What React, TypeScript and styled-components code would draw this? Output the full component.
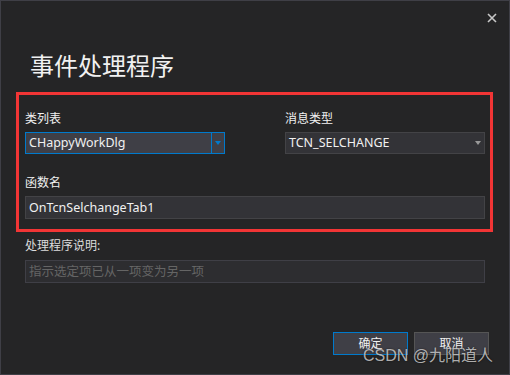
import styled, { createGlobalStyle } from "styled-components";

const GlobalStyle = createGlobalStyle`
  html, body {
    margin: 0;
    padding: 0;
    background: #252526;
  }
  * {
    box-sizing: border-box;
  }
`;

const FONT = `"Noto Sans", "Noto Sans CJK SC", sans-serif`;

// 다이얼로그 전체 틀
const Window = styled.div`
  position: relative;
  width: 510px;
  height: 375px;
  background: #252526;
  border: 1px solid #3f3f46;
  display: flex;
  flex-direction: column;
  font-family: ${FONT};
  color: #f1f1f1;
`;

const TitleBar = styled.div`
  height: 30px;
  display: flex;
  justify-content: flex-end;
  align-items: flex-start;
  padding: 11px 11px 0 0;
`;

const CloseButton = styled.button`
  width: 12px;
  height: 12px;
  padding: 0;
  border: none;
  background: transparent;
  display: flex;
  align-items: center;
  justify-content: center;
  cursor: pointer;
`;

const Heading = styled.h1`
  margin: 19px 0 0 29px;
  font-size: 24px;
  font-weight: 400;
  line-height: 32px;
  height: 32px;
  color: #f1f1f1;
`;

// 빨간 강조 박스
const HighlightBox = styled.section`
  margin: 10px 16px 0 15px;
  border: 3px solid #f23535;
  padding: 16px 5px 10px 6px;
  display: grid;
  grid-template-columns: 200px 200px;
  justify-content: space-between;
  row-gap: 21px;
`;

const Field = styled.div<{ $wide?: boolean }>`
  display: flex;
  flex-direction: column;
  gap: 5px;
  grid-column: ${({ $wide }) => ($wide ? "1 / -1" : "auto")};
`;

const Label = styled.label<{ $dim?: boolean }>`
  font-size: 12px;
  line-height: 16px;
  height: 16px;
  color: ${({ $dim }) => ($dim ? "#dcdcdc" : "#f1f1f1")};
`;

const Combo = styled.div<{ $focused?: boolean }>`
  height: 22px;
  display: flex;
  align-items: stretch;
  background: ${({ $focused }) => ($focused ? "#3f3f46" : "#333337")};
  border: 1px solid ${({ $focused }) => ($focused ? "#007acc" : "#434346")};
`;

const ComboText = styled.span`
  flex: 1;
  padding-left: 3px;
  font-size: 12.5px;
  line-height: 20px;
  color: #f1f1f1;
`;

const ComboButton = styled.span<{ $focused?: boolean }>`
  width: 13px;
  display: flex;
  align-items: center;
  justify-content: center;
  border-left: 1px solid ${({ $focused }) => ($focused ? "#007acc" : "transparent")};
`;

const Arrow = styled.span<{ $focused?: boolean }>`
  width: 0;
  height: 0;
  border-left: 3.5px solid transparent;
  border-right: 3.5px solid transparent;
  border-top: 4px solid ${({ $focused }) => ($focused ? "#007acc" : "#999999")};
`;

const TextBox = styled.div<{ $disabled?: boolean }>`
  height: 23px;
  padding-left: 3px;
  background: ${({ $disabled }) => ($disabled ? "#2d2d30" : "#333337")};
  border: 1px solid ${({ $disabled }) => ($disabled ? "#3f3f46" : "#434346")};
  font-size: 12.5px;
  line-height: 21px;
  color: ${({ $disabled }) => ($disabled ? "#656565" : "#f1f1f1")};
`;

const Description = styled.div`
  margin: 6px 24px 0 24px;
  display: flex;
  flex-direction: column;
  gap: 6px;
`;

const Footer = styled.div`
  margin-top: auto;
  padding: 0 20px 19px 0;
  display: flex;
  justify-content: flex-end;
  gap: 6px;
`;

const DialogButton = styled.button<{ $primary?: boolean }>`
  width: 75px;
  height: 23px;
  padding: 0;
  background: #3f3f46;
  border: 1px solid ${({ $primary }) => ($primary ? "#007acc" : "#555555")};
  color: #f1f1f1;
  font-family: ${FONT};
  font-size: 12px;
  line-height: 21px;
  cursor: pointer;
`;

// 워터마크 (위에 겹쳐짐)
const Watermark = styled.div`
  position: absolute;
  left: 362px;
  top: 345px;
  font-family: "Liberation Sans", "Noto Sans CJK SC", sans-serif;
  font-size: 16px;
  line-height: 20px;
  color: rgba(215, 215, 215, 0.8);
  text-shadow: 0 0 2px rgba(0, 0, 0, 0.6);
  white-space: nowrap;
  pointer-events: none;
`;

const CloseIcon = () => (
  <svg width="10" height="10" viewBox="0 0 10 10">
    <path d="M1 1 L9 9 M9 1 L1 9" stroke="#c8c8c8" strokeWidth="1.6" />
  </svg>
);

interface ComboBoxProps {
  value: string;
  focused?: boolean;
}

const ComboBox = ({ value, focused }: ComboBoxProps) => (
  <Combo $focused={focused}>
    <ComboText>{value}</ComboText>
    <ComboButton $focused={focused}>
      <Arrow $focused={focused} />
    </ComboButton>
  </Combo>
);

const App = () => {
  return (
    <>
      <GlobalStyle />
      <Window>
        <TitleBar>
          <CloseButton aria-label="close">
            <CloseIcon />
          </CloseButton>
        </TitleBar>
        <Heading>事件处理程序</Heading>

        <HighlightBox>
          <Field>
            <Label>类列表</Label>
            <ComboBox value="CHappyWorkDlg" focused />
          </Field>
          <Field>
            <Label>消息类型</Label>
            <ComboBox value="TCN_SELCHANGE" />
          </Field>
          <Field $wide>
            <Label>函数名</Label>
            <TextBox>OnTcnSelchangeTab1</TextBox>
          </Field>
        </HighlightBox>

        <Description>
          <Label $dim>处理程序说明:</Label>
          <TextBox $disabled>指示选定项已从一项变为另一项</TextBox>
        </Description>

        <Footer>
          <DialogButton $primary>确定</DialogButton>
          <DialogButton>取消</DialogButton>
        </Footer>

        <Watermark>CSDN @九阳道人</Watermark>
      </Window>
    </>
  );
};

export default App;
